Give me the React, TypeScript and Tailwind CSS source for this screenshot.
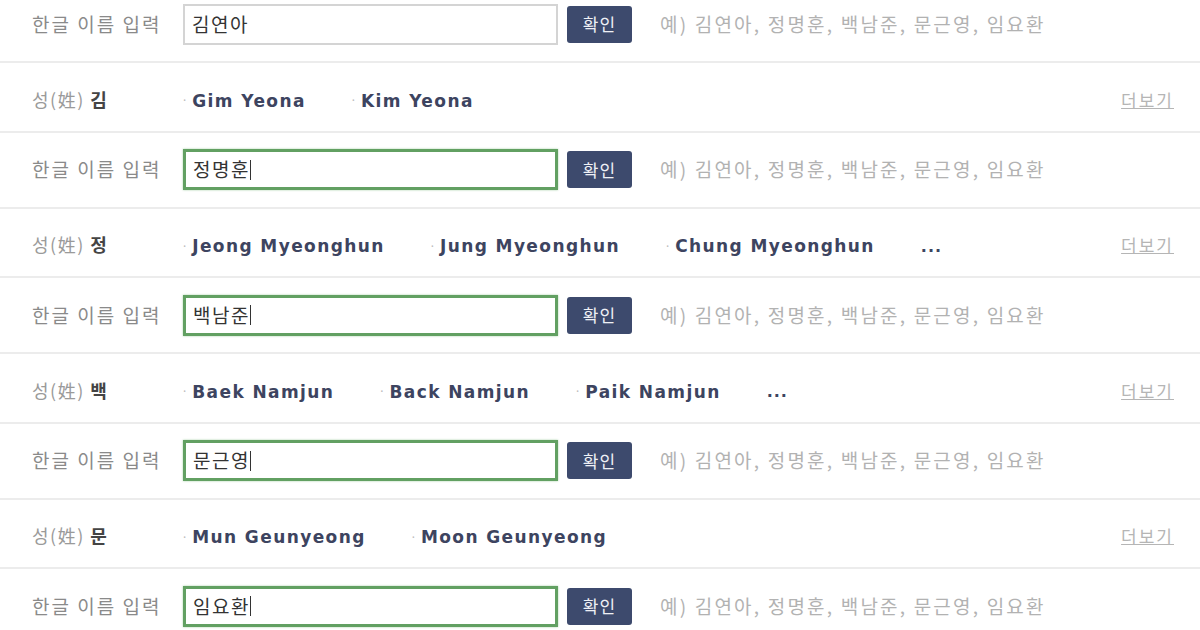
import React from 'react';

type Entry = {
  value: string;
  focused: boolean;
  surname?: string;
  names?: string[];
  more?: boolean;
};

const entries: Entry[] = [
  { value: '김연아', focused: false, surname: '김', names: ['Gim Yeona', 'Kim Yeona'] },
  { value: '정명훈', focused: true, surname: '정', names: ['Jeong Myeonghun', 'Jung Myeonghun', 'Chung Myeonghun'], more: true },
  { value: '백남준', focused: true, surname: '백', names: ['Baek Namjun', 'Back Namjun', 'Paik Namjun'], more: true },
  { value: '문근영', focused: true, surname: '문', names: ['Mun Geunyeong', 'Moon Geunyeong'] },
  { value: '임요환', focused: true },
];

const ko = "font-['Noto_Sans_CJK_KR','Noto_Sans',sans-serif]";

function InputRow({ value, focused }: { value: string; focused: boolean }) {
  return (
    <div className="flex items-center h-[74px] pl-[32px] shrink-0">
      <div className={`w-[151px] text-[19px] tracking-[2px] text-[#8a8a8a] ${ko}`}>한글 이름 입력</div>
      <div
        className={`w-[375px] h-[41px] flex items-center px-[7px] bg-white ${
          focused ? 'border-[3px] border-[#62a062] shadow-[0_0_2px_#a8d0a8]' : 'border-2 border-[#d4d4d4]'
        }`}
      >
        <span className={`text-[19px] text-[#333] tracking-[1.5px] ${ko}`}>{value}</span>
        {focused && <span className="w-[1px] h-[20px] bg-[#333]" />}
      </div>
      <button className={`ml-[9px] w-[65px] h-[37px] rounded-[3px] bg-[#3d4a6d] text-[#eef0f5] text-[17px] tracking-[1px] ${ko}`}>확인</button>
      <div className={`ml-[28px] text-[19px] text-[#b2b2b2] tracking-[2.2px] ${ko}`}>
        예) 김연아, 정명훈, 백남준, 문근영, 임요환
      </div>
    </div>
  );
}

function SurnameRow({ surname, names, more }: { surname: string; names: string[]; more?: boolean }) {
  return (
    <div className="flex items-center h-[67.5px] pt-[5px] pl-[32px] pr-[26px] shrink-0">
      <div className={`w-[151px] text-[18px] tracking-[1.5px] ${ko}`}>
        <span className="text-[#9a9a9a]">성(姓)</span>{' '}
        <span className="font-bold text-[#444]">{surname}</span>
      </div>
      <div className="flex items-center gap-[46px] pt-[4px]">
        {names.map((n) => (
          <div key={n} className="flex items-center">
            <span className="text-[#bbb] text-[12px] mr-[6px]">·</span>
            <span className="font-['DejaVu_Sans',sans-serif] font-bold text-[17px] tracking-[1.4px] text-[#3d4460]">{n}</span>
          </div>
        ))}
        {more && <span className="font-['DejaVu_Sans',sans-serif] font-bold text-[16px] tracking-[1px] text-[#3d4460]">...</span>}
      </div>
      <a className={`ml-auto text-[17px] tracking-[2px] text-[#b5b5b5] underline ${ko}`}>더보기</a>
    </div>
  );
}

function Divider() {
  return <div className="h-[2px] bg-[#ececec] shrink-0" />;
}

export default function App() {
  return (
    <div className="w-[1200px] h-[630px] overflow-hidden bg-white">
      <div className="flex flex-col -mt-[13px]">
        {entries.map((e, i) => (
          <React.Fragment key={i}>
            {i > 0 && <Divider />}
            <InputRow value={e.value} focused={e.focused} />
            {e.surname && e.names && (
              <>
                <Divider />
                <SurnameRow surname={e.surname} names={e.names} more={e.more} />
              </>
            )}
          </React.Fragment>
        ))}
      </div>
    </div>
  );
}
